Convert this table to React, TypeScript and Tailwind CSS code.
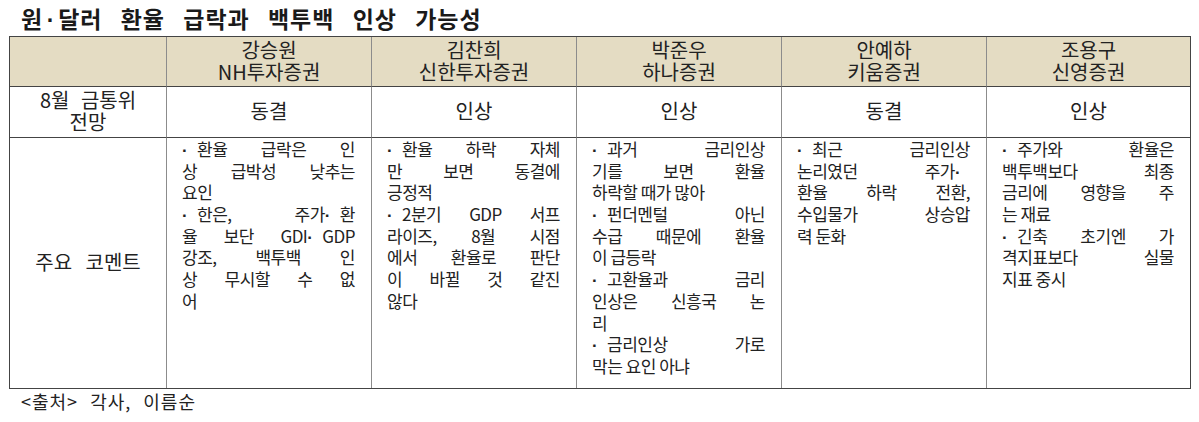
import React from 'react'

/* 원·달러 환율 급락과 백투백 인상 가능성 — 증권사 코멘트 표 */

type Line = { t: string; j?: boolean }

const analysts = [
  { name: '강승원', firm: 'NH투자증권', view: '동결' },
  { name: '김찬희', firm: '신한투자증권', view: '인상' },
  { name: '박준우', firm: '하나증권', view: '인상' },
  { name: '안예하', firm: '키움증권', view: '동결' },
  { name: '조용구', firm: '신영증권', view: '인상' },
]

// 원문 줄바꿈 그대로, j = 양쪽 정렬 줄
const comments: Line[][] = [
  [
    { t: '·환율 급락은 인', j: true },
    { t: '상 급박성 낮추는', j: true },
    { t: '요인' },
    { t: '·한은, 주가·환', j: true },
    { t: '율 보단 GDI·GDP', j: true },
    { t: '강조, 백투백 인', j: true },
    { t: '상 무시할 수 없', j: true },
    { t: '어' },
  ],
  [
    { t: '·환율 하락 자체', j: true },
    { t: '만 보면 동결에', j: true },
    { t: '긍정적' },
    { t: '·2분기 GDP 서프', j: true },
    { t: '라이즈, 8월 시점', j: true },
    { t: '에서 환율로 판단', j: true },
    { t: '이 바뀔 것 같진', j: true },
    { t: '않다' },
  ],
  [
    { t: '·과거 금리인상', j: true },
    { t: '기를 보면 환율', j: true },
    { t: '하락할 때가 많아' },
    { t: '·펀더멘털 아닌', j: true },
    { t: '수급 때문에 환율', j: true },
    { t: '이 급등락' },
    { t: '·고환율과 금리', j: true },
    { t: '인상은 신흥국 논', j: true },
    { t: '리' },
    { t: '·금리인상 가로', j: true },
    { t: '막는 요인 아냐' },
  ],
  [
    { t: '·최근 금리인상', j: true },
    { t: '논리였던 주가·', j: true },
    { t: '환율 하락 전환,', j: true },
    { t: '수입물가 상승압', j: true },
    { t: '력 둔화' },
  ],
  [
    { t: '·주가와 환율은', j: true },
    { t: '백투백보다 최종', j: true },
    { t: '금리에 영향을 주', j: true },
    { t: '는 재료' },
    { t: '·긴축 초기엔 가', j: true },
    { t: '격지표보다 실물', j: true },
    { t: '지표 중시' },
  ],
]

// 가운뎃점은 좁은 글꼴로 한 칸 가운데에
function Dotted({ text }: { text: string }) {
  const parts = text.split('·')
  return (
    <>
      {parts.map((p, i) => (
        <React.Fragment key={i}>
          {i > 0 && (
            <span className="inline-block w-[15px] text-center leading-[10px] tracking-normal font-['Liberation_Sans',sans-serif] font-bold">·</span>
          )}
          {p}
        </React.Fragment>
      ))}
    </>
  )
}

export default function App() {
  return (
    <div className="w-[1199px] h-[422px] bg-white text-[#222] font-['Noto_Sans_CJK_KR','Noto_Sans',sans-serif]">
      <h1 className="h-[36px] pl-[21px] text-[23px] font-bold leading-[36px] tracking-[1px] [word-spacing:12px] text-[#1a1a1a]">
        원<Dotted text="·" />달러 환율 급락과 백투백 인상 가능성
      </h1>

      <div className="ml-[9px] w-[1182px] grid grid-cols-[156px_repeat(4,205px)_204px] grid-rows-[50px_51px_250px] border border-[#444] text-[20px]">
        {/* header */}
        <div className="bg-[#e4dcc3] border-b border-[#444]" />
        {analysts.map(a => (
          <div
            key={a.name}
            className="bg-[#e4dcc3] border-b border-l border-b-[#444] border-l-[#8c8c8c] flex flex-col items-center justify-center leading-[22px] pb-[1px]"
          >
            <span>{a.name}</span>
            <span>{a.firm}</span>
          </div>
        ))}

        {/* 8월 금통위 전망 */}
        <div className="border-b border-[#444] flex flex-col items-center justify-center leading-[22px] pb-[3px]">
          <span className="[word-spacing:7px]">8월 금통위</span>
          <span>전망</span>
        </div>
        {analysts.map(a => (
          <div
            key={a.name}
            className="border-b border-l border-b-[#444] border-l-[#8c8c8c] flex items-center justify-center pb-[2px]"
          >
            {a.view}
          </div>
        ))}

        {/* 주요 코멘트 */}
        <div className="flex items-center justify-center [word-spacing:9px] pb-[2px]">주요 코멘트</div>
        {comments.map((lines, ci) => (
          <div key={ci} className="border-l border-[#8c8c8c] pl-[15px] pr-[16px] text-[17px] tracking-[-0.5px] leading-[21.7px]">
            {lines.map((l, li) => (
              <div
                key={li}
                className={
                  l.j
                    ? 'h-[21.7px] whitespace-nowrap [text-align:justify] [text-align-last:justify] [text-justify:inter-word]'
                    : 'h-[21.7px] whitespace-nowrap'
                }
              >
                <Dotted text={l.t} />
              </div>
            ))}
          </div>
        ))}
      </div>

      <p className="pl-[21px] pt-[1px] text-[18px] leading-[22px] tracking-[1px] [word-spacing:7px]">&lt;출처&gt; 각사, 이름순</p>
    </div>
  )
}
